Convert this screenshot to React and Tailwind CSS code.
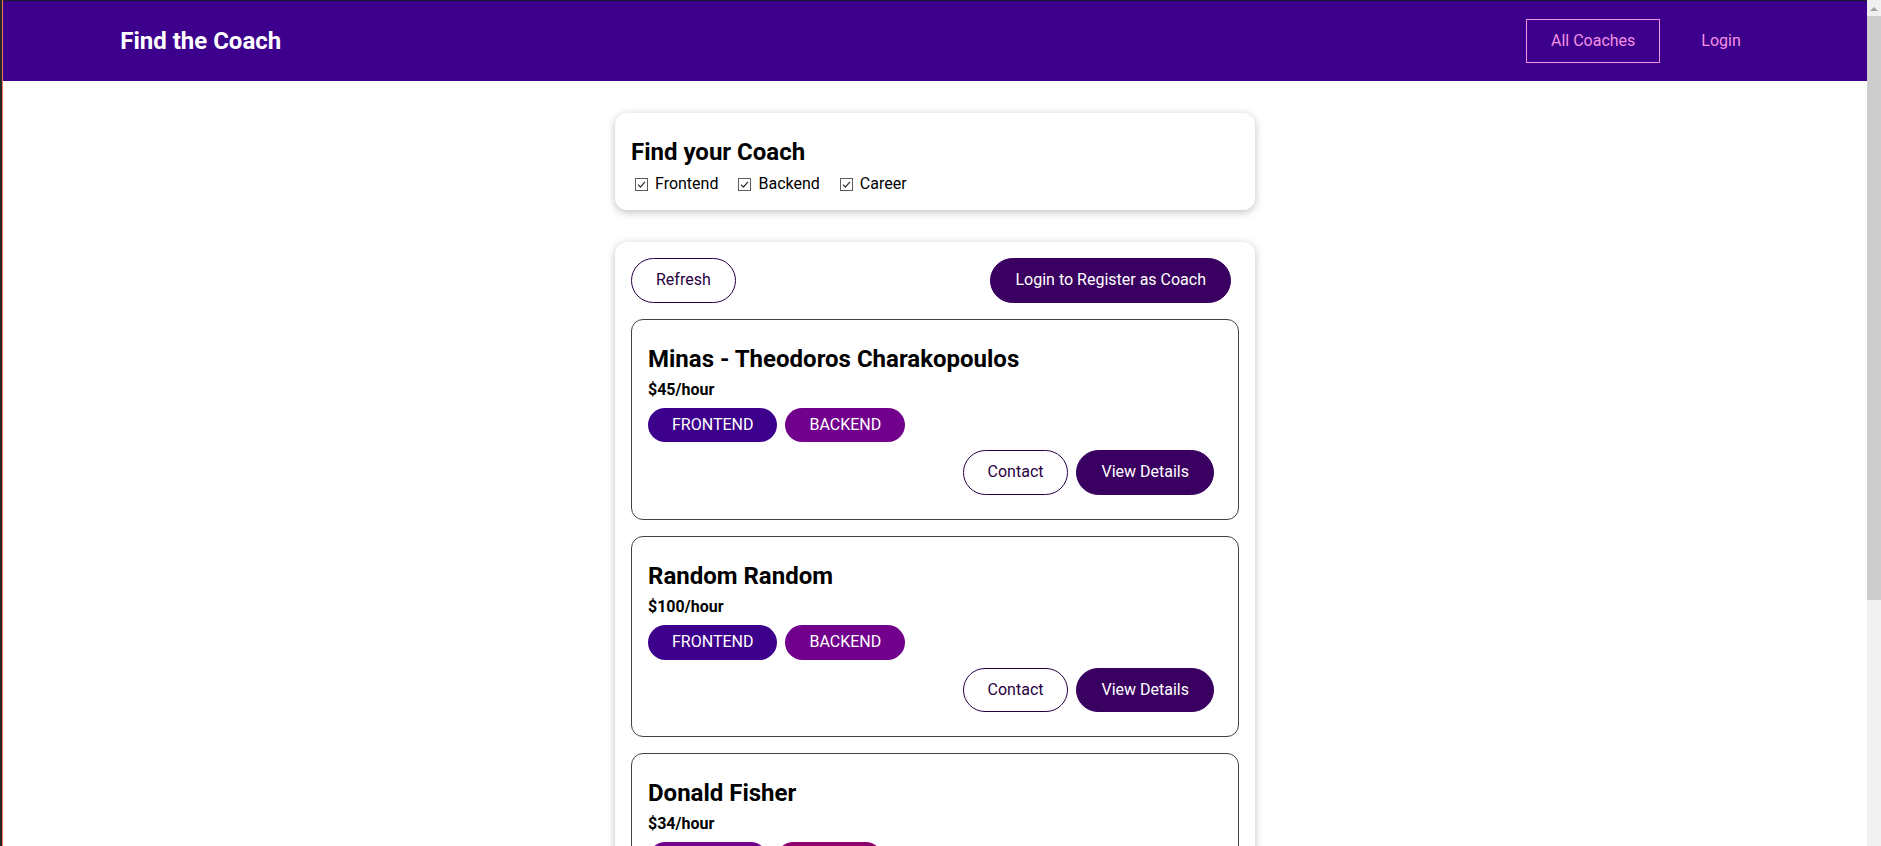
import React from 'react';

const coaches = [
  { id: 'c1', name: 'Minas - Theodoros Charakopoulos', rate: 45, areas: ['frontend', 'backend'] },
  { id: 'c2', name: 'Random Random', rate: 100, areas: ['frontend', 'backend'] },
  { id: 'c3', name: 'Donald Fisher', rate: 34, areas: ['backend', 'career'] },
];

const badgeColors = {
  frontend: 'bg-[#3d008d]',
  backend: 'bg-[#71008d]',
  career: 'bg-[#8d006e]',
};

const FakeCheckbox = () => (
  <span className="ml-[4px] mr-[3px] inline-flex h-[13px] w-[13px] shrink-0 items-center justify-center border border-[#5c5c5c] bg-white">
    <svg width="9" height="9" viewBox="0 0 9 9" fill="none">
      <path d="M1 4.6 L3.4 7 L8 1.8" stroke="#333" strokeWidth="1.2" />
    </svg>
  </span>
);

const CoachItem = ({ coach }) => (
  <li className="my-4 rounded-[12px] border border-[#424242] p-4">
    <h3 className="mb-2 mt-[9px] text-[24px] font-bold leading-[28px]">{coach.name}</h3>
    <h4 className="my-2 text-[16px] font-bold leading-[18.75px]">${coach.rate}/hour</h4>
    <div className="my-2 flex">
      {coach.areas.map((a) => (
        <span
          key={a}
          className={`${badgeColors[a]} mr-2 rounded-[30px] px-6 py-2 text-[16px] uppercase leading-[18.75px] text-white`}
        >
          {a}
        </span>
      ))}
    </div>
    <div className="my-2 flex justify-end">
      <a className="mr-2 rounded-[30px] border border-[#270041] px-6 py-3 text-[16px] leading-[18.75px] text-[#270041]">
        Contact
      </a>
      <a className="mr-2 rounded-[30px] border border-[#3a0061] bg-[#3a0061] px-6 py-3 text-[16px] leading-[18.75px] text-white">
        View Details
      </a>
    </div>
  </li>
);

export default function App() {
  return (
    <div className="flex h-[846px] overflow-hidden bg-white font-['Roboto',sans-serif] text-black">
      {/* window edge */}
      <div className="w-[2px] shrink-0 bg-[#262626]" />
      <div className="w-px shrink-0 bg-[#ee7b5c]" />

      <div className="min-w-0 flex-1 overflow-hidden">
        <header className="flex h-[81px] w-full items-center justify-center border-t border-[#1c1a26] bg-[#3d008d]">
          <nav className="mx-auto flex w-[90%] items-center justify-between">
            <h1 className="m-0 text-[24px] font-bold leading-[28px]">
              <a className="px-6 text-white">Find the Coach</a>
            </h1>
            <ul className="flex items-center">
              <li className="mx-2">
                <a className="inline-block border border-[#f391e3] px-6 py-3 text-[16px] leading-[18.75px] text-[#f391e3]">
                  All Coaches
                </a>
              </li>
              <li className="mx-2">
                <a className="inline-block border border-transparent px-6 py-3 text-[16px] leading-[18.75px] text-[#f391e3]">
                  Login
                </a>
              </li>
            </ul>
          </nav>
        </header>

        <section className="mx-auto mt-8 max-w-[40rem] rounded-[12px] p-4 shadow-[0_2px_8px_rgba(0,0,0,0.26)]">
          <h2 className="mb-2 mt-[9px] text-[24px] font-bold leading-[28px]">Find your Coach</h2>
          <div className="flex h-[20px] items-center text-[16px]">
            {['Frontend', 'Backend', 'Career'].map((f) => (
              <span key={f} className="mr-4 inline-flex items-center">
                <FakeCheckbox />
                <label className="ml-[4px]">{f}</label>
              </span>
            ))}
          </div>
        </section>

        <section className="mx-auto mt-8 max-w-[40rem] rounded-[12px] p-4 shadow-[0_2px_8px_rgba(0,0,0,0.26)]">
          <div className="flex justify-between">
            <button className="mr-2 rounded-[30px] border border-[#270041] px-6 py-3 text-[16px] leading-[18.75px] text-[#270041]">
              Refresh
            </button>
            <a className="mr-2 rounded-[30px] border border-[#3a0061] bg-[#3a0061] px-6 py-3 text-[16px] leading-[18.75px] text-white">
              Login to Register as Coach
            </a>
          </div>
          <ul>
            {coaches.map((c) => (
              <CoachItem key={c.id} coach={c} />
            ))}
          </ul>
        </section>
      </div>

      {/* scrollbar */}
      <div className="flex w-[14px] shrink-0 flex-col bg-[#f0f0f0]">
        <div className="flex h-[16px] items-center justify-center">
          <svg width="8" height="5" viewBox="0 0 8 5">
            <path d="M0 5 L4 1 L8 5 Z" fill="#a3a3a3" />
          </svg>
        </div>
        <div className="h-[584px] bg-[#cdcdcd]" />
      </div>
    </div>
  );
}
